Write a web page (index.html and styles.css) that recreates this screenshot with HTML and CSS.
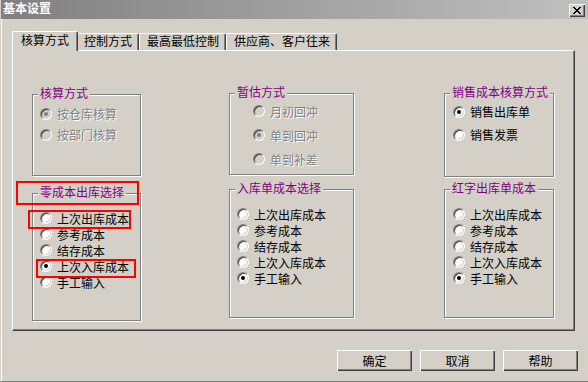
FILE: index.html
```html
<!DOCTYPE html>
<html lang="zh-CN">
<head>
    <meta charset="UTF-8" />
    <title>基本设置</title>
    <link rel="stylesheet" href="styles.css">
</head>
<body>
    <div class="window">
        <div class="title-bar">
            <span class="title-text">基本设置</span>
            <button type="button" class="close-button">
                <svg width="8" height="7" viewBox="0 0 8 7">
                    <path d="M0 0h2v1H0z M6 0h2v1H6z M1 1h2v1H1z M5 1h2v1H5z M2 2h4v1H2z M3 3h2v1H3z M2 4h4v1H2z M1 5h2v1H1z M5 5h2v1H5z M0 6h2v1H0z M6 6h2v1H6z" fill="#000" />
                </svg>
            </button>
        </div>

        <div class="window-body">
            <div class="tabs">
                <div class="tab tab-active">核算方式</div>
                <div class="tab">控制方式</div>
                <div class="tab">最高最低控制</div>
                <div class="tab">供应商、客户往来</div>
            </div>

            <div class="tab-panel">
                <div class="column column-left">
                    <div class="group group-cost">
                        <span class="group-title">核算方式</span>
                        <label class="option disabled"><span class="radio checked"></span>按仓库核算</label>
                        <label class="option disabled"><span class="radio"></span>按部门核算</label>
                    </div>
                    <div class="group group-zero">
                        <span class="group-title">零成本出库选择</span>
                        <label class="option"><span class="radio"></span>上次出库成本</label>
                        <label class="option"><span class="radio"></span>参考成本</label>
                        <label class="option"><span class="radio"></span>结存成本</label>
                        <label class="option"><span class="radio checked"></span>上次入库成本</label>
                        <label class="option"><span class="radio"></span>手工输入</label>
                        <span class="mark mark-title"></span>
                        <span class="mark mark-first"></span>
                        <span class="mark mark-fourth"></span>
                    </div>
                </div>

                <div class="column column-middle">
                    <div class="group group-estimate">
                        <span class="group-title">暂估方式</span>
                        <label class="option disabled"><span class="radio"></span>月初回冲</label>
                        <label class="option disabled"><span class="radio checked"></span>单到回冲</label>
                        <label class="option disabled"><span class="radio"></span>单到补差</label>
                    </div>
                    <div class="group group-inbound">
                        <span class="group-title">入库单成本选择</span>
                        <label class="option"><span class="radio"></span>上次出库成本</label>
                        <label class="option"><span class="radio"></span>参考成本</label>
                        <label class="option"><span class="radio"></span>结存成本</label>
                        <label class="option"><span class="radio"></span>上次入库成本</label>
                        <label class="option"><span class="radio checked"></span>手工输入</label>
                    </div>
                </div>

                <div class="column column-right">
                    <div class="group group-sales">
                        <span class="group-title">销售成本核算方式</span>
                        <label class="option"><span class="radio checked"></span>销售出库单</label>
                        <label class="option"><span class="radio"></span>销售发票</label>
                    </div>
                    <div class="group group-red">
                        <span class="group-title">红字出库单成本</span>
                        <label class="option"><span class="radio"></span>上次出库成本</label>
                        <label class="option"><span class="radio"></span>参考成本</label>
                        <label class="option"><span class="radio"></span>结存成本</label>
                        <label class="option"><span class="radio"></span>上次入库成本</label>
                        <label class="option"><span class="radio checked"></span>手工输入</label>
                    </div>
                </div>
            </div>
        </div>

        <div class="dialog-buttons">
            <button type="button" class="button">确定</button>
            <button type="button" class="button">取消</button>
            <button type="button" class="button">帮助</button>
        </div>
    </div>
</body>
</html>
```

FILE: styles.css
```css
html {
    height: 100%;
}
body {
    margin: 0;
    padding: 0;
    background: #d4d0c8;
    font-family: "Liberation Sans", "Noto Sans CJK SC", sans-serif;
    font-size: 12px;
    color: #000;
}
.window {
    height: 382px;
    box-sizing: border-box;
    border-left: 1px solid #d4d0c8;
    border-bottom: 1px solid #808080;
    box-shadow: inset 1px 0 0 #fff;
    display: flex;
    flex-direction: column;
}
.title-bar {
    height: 19px;
    flex: none;
    display: flex;
    justify-content: space-between;
    align-items: flex-start;
    padding: 0 3px 0 2px;
    background: linear-gradient(to right, #808080, #c0c0c0);
}
.title-text {
    color: #fff;
    font-weight: bold;
    line-height: 19px;
}
.close-button {
    width: 16px;
    height: 13px;
    margin-top: 4px;
    padding: 0;
    border: none;
    background: #d4d0c8;
    box-shadow: inset 1px 1px 0 #fff, inset -1px -1px 0 #404040, inset -2px -2px 0 #808080;
    display: flex;
    align-items: center;
    justify-content: center;
}
.window-body {
    padding: 12px 13px 0 11px;
    display: flex;
    flex-direction: column;
}
.tabs {
    display: flex;
    align-items: flex-end;
    position: relative;
    z-index: 1;
}
.tab {
    height: 17px;
    box-sizing: border-box;
    padding: 0 6px 0 7px;
    border: 1px solid;
    border-color: #fff #404040 transparent #fff;
    border-bottom: none;
    border-radius: 2px 2px 0 0;
    box-shadow: inset -1px 0 0 #808080;
    line-height: 16px;
    white-space: nowrap;
}
.tab-active {
    height: 20px;
    margin-bottom: -1px;
    margin-right: -2px;
    padding: 1px 8px 0;
    line-height: 16px;
    background: #d4d0c8;
    position: relative;
    z-index: 2;
}
.tab-panel {
    height: 281px;
    box-sizing: border-box;
    border: 1px solid;
    border-color: #fff #404040 #404040 #fff;
    box-shadow: inset -1px -1px 0 #808080;
    padding: 42px 0 0 19px;
    display: flex;
    align-items: flex-start;
}
.column {
    display: flex;
    flex-direction: column;
}
.column-left {
    width: 109px;
}
.column-middle {
    width: 125px;
    margin-left: 88px;
}
.column-right {
    width: 110px;
    margin-left: 90px;
}
.group {
    position: relative;
    box-sizing: border-box;
    border: 1px solid #808080;
    box-shadow: 1px 1px 0 #fff, inset 1px 1px 0 #fff;
    padding-left: 7px;
    display: flex;
    flex-direction: column;
}
.group-title {
    position: absolute;
    top: -8px;
    left: 5px;
    padding: 0 2px;
    line-height: 14px;
    color: #800080;
    background: #d4d0c8;
    white-space: nowrap;
}
.option {
    display: flex;
    align-items: center;
    gap: 5px;
    white-space: nowrap;
}
.radio {
    width: 12px;
    height: 12px;
    flex: none;
    box-sizing: border-box;
    border-radius: 50%;
    border: 1px solid;
    border-color: #808080 #fff #fff #808080;
    background: #fff;
    box-shadow: inset 1px 1px 0 #404040, inset -1px -1px 0 #d4d0c8;
    display: flex;
    align-items: center;
    justify-content: center;
}
.radio.checked::after {
    content: "";
    width: 4px;
    height: 4px;
    border-radius: 50%;
    background: #000;
}
.disabled {
    color: #808080;
    text-shadow: 1px 1px 0 #fff;
}
.disabled .radio {
    background: #d4d0c8;
}
.disabled .radio.checked::after {
    background: #808080;
}

/* top row */
.group-cost {
    height: 82px;
    margin-top: 1px;
    padding-top: 8px;
}
.group-cost .option {
    height: 21px;
}
.group-estimate {
    height: 82px;
    padding: 5px 0 0 23px;
}
.group-estimate .option {
    height: 24px;
}
.group-sales {
    height: 84px;
    padding: 6px 0 0 8px;
}
.group-sales .option {
    height: 23px;
}

/* bottom row */
.group-zero,
.group-inbound,
.group-red {
    padding-top: 16px;
}
.group-zero .option,
.group-inbound .option,
.group-red .option {
    height: 16px;
}
.group-zero {
    height: 128px;
    margin-top: 17px;
}
.group-inbound {
    height: 129px;
    margin-top: 14px;
}
.group-red {
    height: 129px;
    margin-top: 12px;
    padding-left: 8px;
}

/* red annotation boxes */
.mark {
    position: absolute;
    box-sizing: border-box;
    border: 2px solid #f00;
}
.mark-title {
    left: -17px;
    top: -13px;
    width: 123px;
    height: 24px;
}
.mark-first {
    left: -5px;
    top: 16px;
    width: 103px;
    height: 19px;
}
.mark-fourth {
    left: 3px;
    top: 65px;
    width: 100px;
    height: 19px;
}

.dialog-buttons {
    display: flex;
    justify-content: flex-end;
    gap: 8px;
    padding: 19px 10px 0 0;
}
.button {
    width: 75px;
    height: 21px;
    padding: 0;
    border: none;
    font: inherit;
    color: #000;
    background: #d4d0c8;
    box-shadow: inset 1px 1px 0 #fff, inset -1px -1px 0 #404040, inset -2px -2px 0 #808080;
}
```
